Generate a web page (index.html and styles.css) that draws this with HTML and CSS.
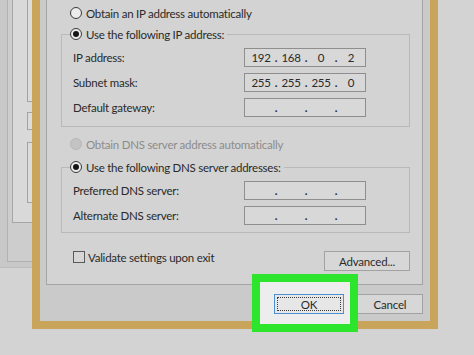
FILE: index.html
```html
<!DOCTYPE html>
<html lang="en">
<head>
  <meta charset="UTF-8">
  <meta name="viewport" content="width=device-width, initial-scale=1.0">
  <title>Internet Protocol Version 4 (TCP/IPv4) Properties</title>
  <link rel="stylesheet" href="styles.css">
</head>
<body>
  <div class="desktop">
    <!-- window behind the dialog -->
    <div class="back-window">
      <div class="back-frame">
        <div class="back-panel">
          <div class="back-box back-box-top"></div>
          <div class="back-box back-box-small"></div>
          <div class="back-box back-box-list"></div>
        </div>
      </div>
    </div>

    <div class="dialog">
      <div class="tab-page">
        <label class="option option-top">
          <span class="radio"></span>
          <span>Obtain an IP address automatically</span>
        </label>

        <div class="group group-ip">
          <label class="option legend">
            <span class="radio checked"></span>
            <span>Use the following IP address:</span>
          </label>
          <div class="field-rows">
            <div class="field-row">
              <span class="field-label">IP address:</span>
              <div class="ip-box">
                <span class="octet">192</span><span class="dot">.</span><span class="octet">168</span><span class="dot">.</span><span class="octet">0</span><span class="dot">.</span><span class="octet">2</span>
              </div>
            </div>
            <div class="field-row">
              <span class="field-label">Subnet mask:</span>
              <div class="ip-box">
                <span class="octet">255</span><span class="dot">.</span><span class="octet">255</span><span class="dot">.</span><span class="octet">255</span><span class="dot">.</span><span class="octet">0</span>
              </div>
            </div>
            <div class="field-row">
              <span class="field-label">Default gateway:</span>
              <div class="ip-box">
                <span class="octet"></span><span class="dot">.</span><span class="octet"></span><span class="dot">.</span><span class="octet"></span><span class="dot">.</span><span class="octet"></span>
              </div>
            </div>
          </div>
        </div>

        <label class="option option-disabled">
          <span class="radio disabled"></span>
          <span>Obtain DNS server address automatically</span>
        </label>

        <div class="group group-dns">
          <label class="option legend">
            <span class="radio checked"></span>
            <span>Use the following DNS server addresses:</span>
          </label>
          <div class="field-rows">
            <div class="field-row">
              <span class="field-label">Preferred DNS server:</span>
              <div class="ip-box">
                <span class="octet"></span><span class="dot">.</span><span class="octet"></span><span class="dot">.</span><span class="octet"></span><span class="dot">.</span><span class="octet"></span>
              </div>
            </div>
            <div class="field-row">
              <span class="field-label">Alternate DNS server:</span>
              <div class="ip-box">
                <span class="octet"></span><span class="dot">.</span><span class="octet"></span><span class="dot">.</span><span class="octet"></span><span class="dot">.</span><span class="octet"></span>
              </div>
            </div>
          </div>
        </div>

        <div class="tab-footer">
          <label class="check-option">
            <span class="checkbox"></span>
            <span>Validate settings upon exit</span>
          </label>
          <button class="win-button advanced-button">Advanced...</button>
        </div>
      </div>

      <div class="dialog-buttons">
        <button class="win-button ok-button"><span class="focus-rect">OK</span></button>
        <button class="win-button cancel-button">Cancel</button>
      </div>
    </div>

    <!-- green highlight drawn over the screenshot -->
    <div class="highlight"></div>
  </div>
</body>
</html>
```

FILE: styles.css
```css
:root {
  --desk-bg: #d3d3d3;
  --dialog-bg: #cacaca;
  --page-bg: #d3d3d3;
  --gold: #c8a55a;
  --green: #2ee52e;
  --text: #2a2a2a;
  --muted: #8c8c8c;
}

* {
  box-sizing: border-box;
  margin: 0;
  padding: 0;
}

html, body {
  background: var(--desk-bg);
}

body {
  font-family: Lato, "Noto Sans", sans-serif;
  font-size: 11.5px;
  letter-spacing: -0.25px;
  color: var(--text);
}

.desktop {
  position: relative;
  width: 474px;
  height: 355px;
  overflow: hidden;
  background: var(--desk-bg);
}

/* window behind */
.back-window {
  position: absolute;
  left: -20px;
  top: -20px;
  width: 120px;
  height: 288px;
  padding-left: 27px;
  background: #c8c8c8;
  border-bottom: 1px solid #bdbdbd;
}

.back-frame {
  height: 282px;
  padding-left: 4px;
  background: #cdcdcd;
  border-left: 1px solid #b2b2b2;
  border-bottom: 1px solid #b2b2b2;
}

.back-panel {
  display: flex;
  flex-direction: column;
  height: 243px;
  padding-left: 14px;
  background: #d9d9d9;
  border-left: 1px solid #a6a6a6;
  border-bottom: 1px solid #a6a6a6;
}

.back-box {
  background: #dcdcdc;
  border: 1px solid #a3a3a3;
}

.back-box-top {
  height: 122px;
}

.back-box-small {
  height: 18px;
  margin-top: 10px;
}

.back-box-list {
  height: 61px;
  margin-top: 12px;
}

/* dialog */
.dialog {
  position: absolute;
  left: 32px;
  top: -8px;
  width: 406px;
  height: 337px;
  display: flex;
  flex-direction: column;
  background: var(--dialog-bg);
  border: 8px solid var(--gold);
}

.tab-page {
  height: 286px;
  margin: -1px 7px 0 6px;
  background: var(--page-bg);
  border: 1px solid #a4a4a4;
}

.option {
  display: flex;
  align-items: center;
  gap: 4px;
  white-space: nowrap;
}

.option-top {
  height: 26px;
  padding-left: 23px;
}

.option-disabled {
  height: 26px;
  margin-top: 4px;
  padding-left: 23px;
  color: var(--muted);
}

.radio {
  width: 12px;
  height: 12px;
  border-radius: 50%;
  border: 1px solid #3a3a3a;
  background: #ececec;
  display: flex;
  align-items: center;
  justify-content: center;
  flex-shrink: 0;
}

.radio.checked::after {
  content: '';
  width: 6px;
  height: 6px;
  border-radius: 50%;
  background: #151515;
}

.radio.disabled {
  border-color: #b8b8b8;
  background: #c3c3c3;
}

.group {
  margin: 0 12px 0 14px;
  border: 1px solid #b9b9b9;
}

.group-ip {
  margin-top: 8px;
  padding-bottom: 9px;
}

.group-dns {
  margin-top: 10px;
  padding-bottom: 7px;
}

.legend {
  width: fit-content;
  height: 16px;
  margin: -9px 0 0 8px;
  padding-right: 3px;
  background: var(--page-bg);
}

.field-rows {
  display: flex;
  flex-direction: column;
  gap: 6px;
  margin-top: 6px;
  padding-left: 11px;
}

.field-row {
  display: flex;
  align-items: center;
  height: 19px;
}

.field-label {
  width: 171px;
}

.ip-box {
  display: flex;
  align-items: center;
  width: 122px;
  height: 19px;
  padding-left: 3px;
  background: #d8d8d8;
  border: 1px solid #8e8e8e;
  letter-spacing: -0.3px;
}

.octet {
  width: 26px;
  text-align: center;
}

.dot {
  width: 4px;
  text-align: center;
  font-weight: 700;
}

.tab-footer {
  display: flex;
  align-items: flex-start;
  justify-content: space-between;
  margin: 18px 12px 0 26px;
}

.check-option {
  display: flex;
  align-items: center;
  gap: 3px;
  height: 12px;
  white-space: nowrap;
}

.checkbox {
  width: 12px;
  height: 12px;
  border: 1px solid #5a5a5a;
  background: #d6d6d6;
}

.win-button {
  height: 20px;
  font-family: inherit;
  font-size: 11.5px;
  letter-spacing: -0.2px;
  color: var(--text);
  background: #d7d7d7;
  border: 1px solid #a2a2a2;
}

.advanced-button {
  width: 86px;
}

.dialog-buttons {
  display: flex;
  justify-content: flex-end;
  gap: 13px;
  margin-top: 9px;
  padding-right: 7px;
}

.ok-button {
  position: relative;
  z-index: 2;
  width: 70px;
  padding: 2px;
  background: #e7e7e7;
  border-color: #4d8fd3;
}

.focus-rect {
  display: flex;
  align-items: center;
  justify-content: center;
  height: 100%;
  border: 1px dotted #3a3a3a;
}

.cancel-button {
  width: 66px;
}

.highlight {
  position: absolute;
  left: 252px;
  top: 274px;
  width: 106px;
  height: 58px;
  z-index: 1;
  background: #ededed;
  border: 8px solid var(--green);
}
```
